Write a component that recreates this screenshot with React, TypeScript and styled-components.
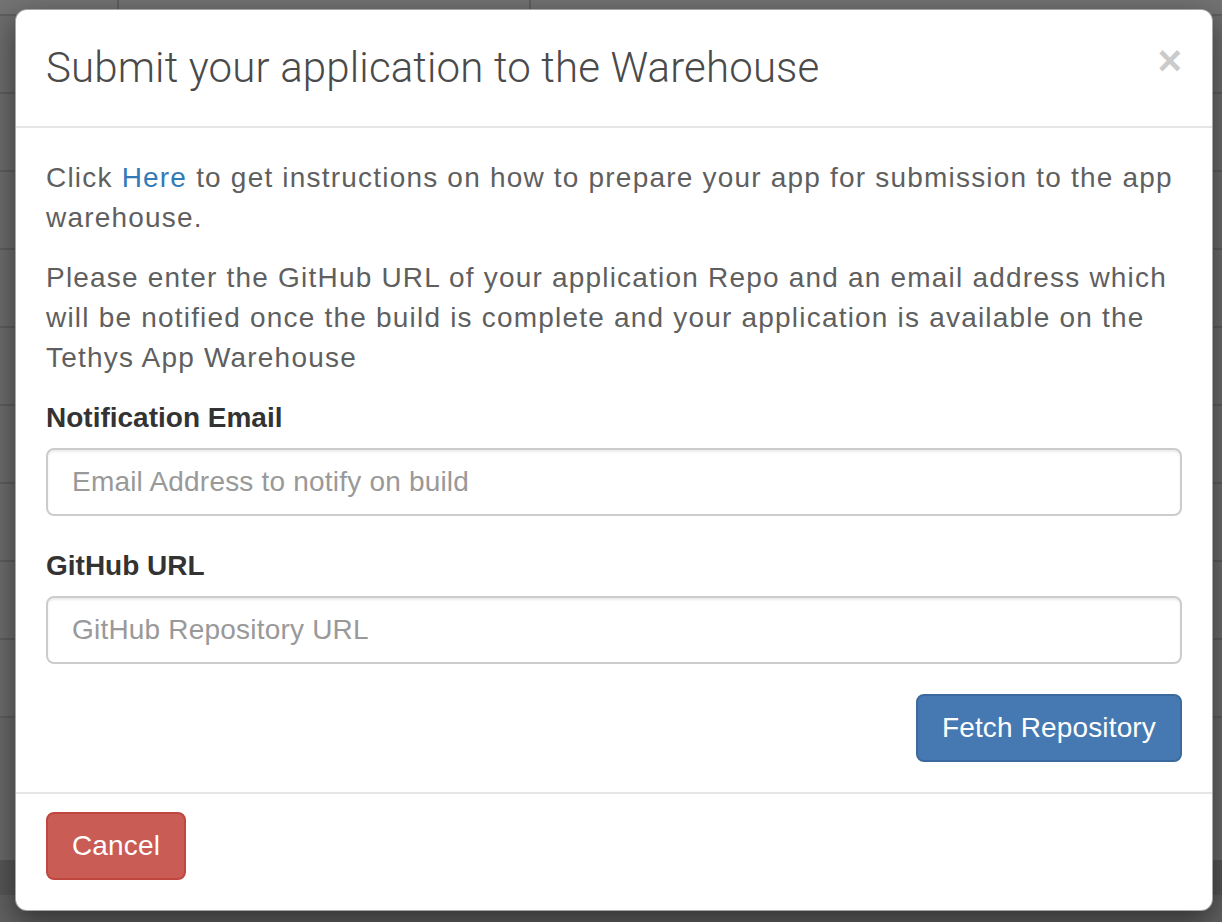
import React from "react";
import styled, { createGlobalStyle } from "styled-components";

const GlobalStyle = createGlobalStyle`
  html, body { margin: 0; padding: 0; }
  body {
    background: #6c6c6c;
    font-family: "Liberation Sans", Arial, Helvetica, sans-serif;
    -webkit-font-smoothing: antialiased;
  }
  * { box-sizing: border-box; }
`;

const Page = styled.div`
  position: relative;
  width: 1222px;
  height: 922px;
  overflow: hidden;
  background: #6e6e6e;
  display: flex;
  flex-direction: column;
`;

const TopRow = styled.div`
  height: 16px;
  display: grid;
  grid-template-columns: 119px 412px 1fr;
  border-bottom: 2px solid #5f5f5f;
  background: #737373;
`;

const TopCell = styled.div`
  border-right: 2px solid #5f5f5f;
  &:last-child { border-right: none; }
`;

const BgRow = styled.div`
  height: 78px;
  border-bottom: 2px solid #5e5e5e;
  background: #6d6d6d;
`;

const BgFiller = styled.div`
  height: 142px;
  background: #6a6a6a;
`;

const BgBand = styled.div`
  height: 35px;
  background: #575757;
`;

const BgBottom = styled.div`
  flex: 1;
  background: #616161;
`;

const Dialog = styled.div`
  position: absolute;
  top: 9px;
  left: 15px;
  width: 1198px;
  background: #fff;
  border: 1px solid rgba(0, 0, 0, 0.35);
  border-radius: 12px;
  box-shadow: 0 10px 30px rgba(0, 0, 0, 0.5);
  display: flex;
  flex-direction: column;
`;

const Header = styled.div`
  display: flex;
  justify-content: space-between;
  align-items: flex-start;
  padding: 30px;
  border-bottom: 2px solid #e5e5e5;
`;

const Title = styled.h4`
  margin: 0;
  font-family: Roboto, "Liberation Sans", sans-serif;
  font-weight: 300;
  font-size: 42px;
  line-height: 56px;
  letter-spacing: 0.15px;
  color: #4a4a4a;
`;

const Close = styled.button`
  border: none;
  background: transparent;
  padding: 0;
  font-family: "Liberation Sans", Arial, sans-serif;
  font-weight: 700;
  font-size: 42px;
  line-height: 42px;
  color: #000;
  opacity: 0.2;
  cursor: pointer;
`;

const Body = styled.div`
  padding: 30px;
`;

const Para = styled.p`
  margin: 0 0 20px;
  font-size: 28px;
  line-height: 40px;
  letter-spacing: 1.2px;
  color: #5f5f5f;
`;

const Link = styled.a`
  color: #337ab7;
  text-decoration: none;
`;

const FormGroup = styled.div`
  margin-bottom: 30px;
`;

const Label = styled.label`
  display: block;
  margin-bottom: 10px;
  font-size: 28px;
  line-height: 40px;
  font-weight: 700;
  color: #333;
`;

const Input = styled.input`
  display: block;
  width: 100%;
  height: 68px;
  padding: 12px 24px;
  font-family: "Liberation Sans", Arial, sans-serif;
  font-size: 28px;
  line-height: 40px;
  letter-spacing: 0.2px;
  color: #555;
  background: #fff;
  border: 2px solid #ccc;
  border-radius: 8px;
  box-shadow: inset 0 2px 2px rgba(0, 0, 0, 0.075);
  outline: none;
  &::placeholder { color: #999; }
`;

const ActionRow = styled.div<{ $align: "start" | "end" }>`
  display: flex;
  justify-content: ${(p) => (p.$align === "end" ? "flex-end" : "flex-start")};
`;

const Button = styled.button<{ $variant: "primary" | "danger" }>`
  height: 68px;
  padding: 12px 24px;
  font-family: "Liberation Sans", Arial, sans-serif;
  font-size: 28px;
  line-height: 40px;
  letter-spacing: 0.15px;
  color: #fff;
  border-radius: 8px;
  cursor: pointer;
  background: ${(p) => (p.$variant === "primary" ? "#4679b2" : "#c95c55")};
  border: 2px solid ${(p) => (p.$variant === "primary" ? "#3b6a9e" : "#c1463f")};
`;

const Footer = styled.div`
  padding: 18px 30px 30px;
  border-top: 2px solid #e5e5e5;
`;

export default function App() {
  return (
    <>
      <GlobalStyle />
      <Page>
        <TopRow>
          <TopCell />
          <TopCell />
          <TopCell />
        </TopRow>
        {Array.from({ length: 9 }).map((_, i) => (
          <BgRow key={i} />
        ))}
        <BgFiller />
        <BgBand />
        <BgBottom />
        <Dialog>
          <Header>
            <Title>Submit your application to the Warehouse</Title>
            <Close aria-label="Close">×</Close>
          </Header>
          <Body>
            <Para>
              Click <Link href="#">Here</Link> to get instructions on how to prepare your app for
              submission to the app warehouse.
            </Para>
            <Para>
              Please enter the GitHub URL of your application Repo and an email address which will
              be notified once the build is complete and your application is available on the Tethys
              App Warehouse
            </Para>
            <FormGroup>
              <Label>Notification Email</Label>
              <Input placeholder="Email Address to notify on build" />
            </FormGroup>
            <FormGroup>
              <Label>GitHub URL</Label>
              <Input placeholder="GitHub Repository URL" />
            </FormGroup>
            <ActionRow $align="end">
              <Button $variant="primary">Fetch Repository</Button>
            </ActionRow>
          </Body>
          <Footer>
            <ActionRow $align="start">
              <Button $variant="danger">Cancel</Button>
            </ActionRow>
          </Footer>
        </Dialog>
      </Page>
    </>
  );
}
